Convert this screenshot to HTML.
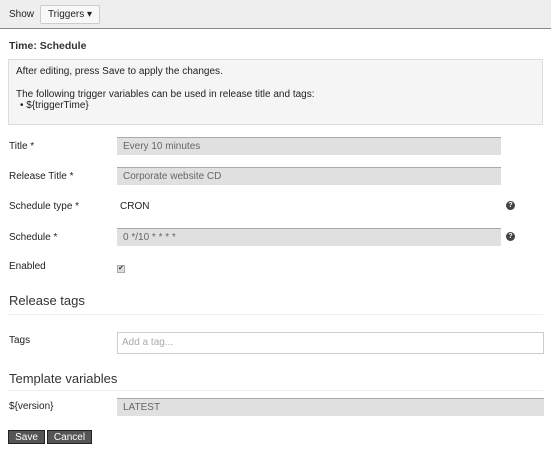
<!DOCTYPE html>
<html><head><style>
body{margin:0;width:551px;height:450px;background:#fff;font-family:"Liberation Sans",sans-serif;font-size:10px;color:#222;position:relative;overflow:hidden}
.a{position:absolute}
.bar{left:0;top:0;width:551px;height:28px;background:#eeeeee;border-bottom:1px solid #888}
.btn{left:40px;top:5px;width:58px;height:17px;background:#f8f8f8;border:1px solid #ccc;border-radius:2px;font-size:10px;line-height:17px;text-align:center}
.box{left:8px;top:59px;width:535px;height:66px;background:#f5f5f5;border:1px solid #ddd;box-sizing:border-box}
.inp{background:#e0e0e0;border-top:1px solid #aaa;box-sizing:border-box;height:18px;line-height:17px;padding-left:6px;color:#666;font-size:10px}
.q{width:9px;height:9px;border-radius:50%;background:#444;color:#fff;font-size:7px;line-height:9px;text-align:center;font-weight:bold}
.h{font-size:13px;color:#333}
.hr{height:1px;background:#eee;left:8px;width:535px}
.b{background:#555;color:#fff;border:1px solid #222;height:14px;text-align:center;font-size:10px;box-sizing:border-box;line-height:13px}
</style></head><body>
<div class="a bar"></div>
<div class="a" style="left:9px;top:9px">Show</div>
<div class="a btn">Triggers ▾</div>
<div class="a" style="left:9px;top:40px;font-size:10.5px;font-weight:bold;color:#333">Time: Schedule</div>
<div class="a box"></div>
<div class="a" style="left:16px;top:66px">After editing, press Save to apply the changes.</div>
<div class="a" style="left:16px;top:89px">The following trigger variables can be used in release title and tags:</div>
<div class="a" style="left:20px;top:100px">• ${triggerTime}</div>
<div class="a" style="left:9px;top:141px">Title *</div>
<div class="a inp" style="left:117px;top:137px;width:384px">Every 10 minutes</div>
<div class="a" style="left:9px;top:171px">Release Title *</div>
<div class="a inp" style="left:117px;top:167px;width:384px">Corporate website CD</div>
<div class="a" style="left:9px;top:201px">Schedule type *</div>
<div class="a" style="left:120px;top:201px">CRON</div>
<div class="a q" style="left:506px;top:201px">?</div>
<div class="a" style="left:9px;top:232px">Schedule *</div>
<div class="a inp" style="left:117px;top:228px;width:384px">0 */10 * * * *</div>
<div class="a q" style="left:506px;top:232px">?</div>
<div class="a" style="left:9px;top:261px">Enabled</div>
<div class="a" style="left:117px;top:265px;width:6px;height:6px;background:#ddd;border:1px solid #aaa;font-size:7px;line-height:6px;color:#333;text-align:center">✔</div>
<div class="a h" style="left:9px;top:293px">Release tags</div>
<div class="a hr" style="top:314px"></div>
<div class="a" style="left:9px;top:335px">Tags</div>
<div class="a" style="left:117px;top:332px;width:427px;height:22px;border:1px solid #ccc;box-sizing:border-box;padding-left:4px;line-height:20px;color:#aaa">Add a tag...</div>
<div class="a h" style="left:9px;top:371px">Template variables</div>
<div class="a hr" style="top:390px"></div>
<div class="a" style="left:9px;top:401px">${version}</div>
<div class="a inp" style="left:117px;top:398px;width:427px">LATEST</div>
<div class="a b" style="left:8px;top:430px;width:37px">Save</div>
<div class="a b" style="left:47px;top:430px;width:45px">Cancel</div>
</body></html>
